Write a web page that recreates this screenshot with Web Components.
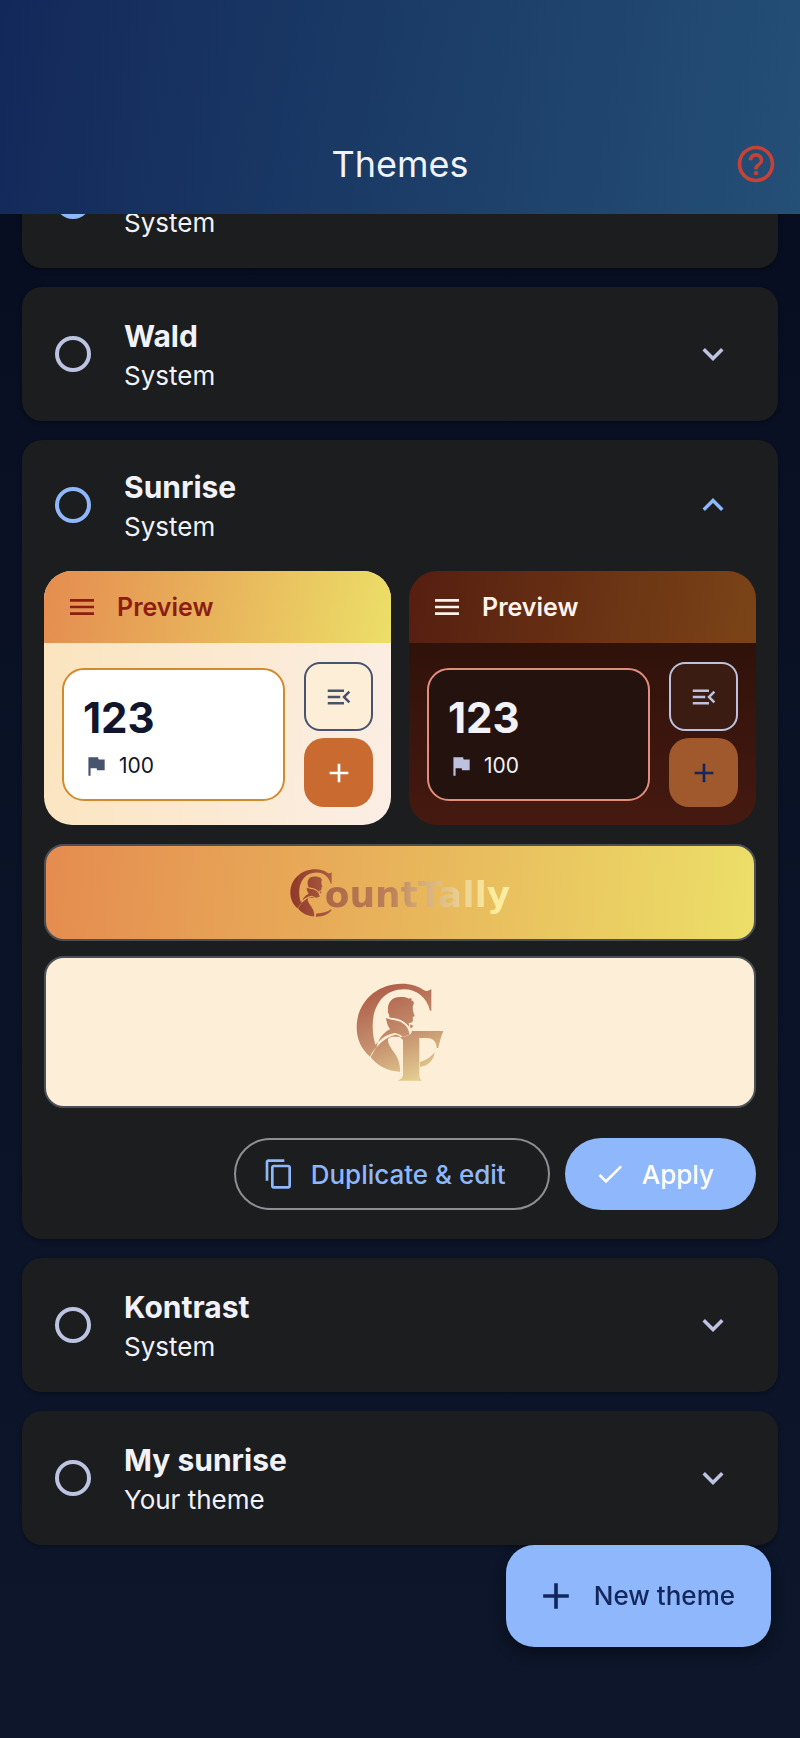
<!DOCTYPE html>
<html lang="en">
<head>
<meta charset="utf-8">
<meta name="viewport" content="width=device-width, initial-scale=1">
<title>Themes</title>
<style>
  :root {
    --surface: #1b1d1f;
    --text: #f1f2fa;
    --muted: #bcc4e2;
    --accent: #8fb7fb;
    --on-accent: #14275c;
  }

  body {
    margin: 0;
    color: var(--text);
    background: #0b1329;
    font-family: Inter, "Noto Sans", sans-serif;
  }
</style>
</head>
<body>

<themes-page>
  <theme-item name="Ozean" owner="System" selected></theme-item>
  <theme-item name="Wald" owner="System"></theme-item>
  <theme-item name="Sunrise" owner="System" open>
    <theme-details></theme-details>
  </theme-item>
  <theme-item name="Kontrast" owner="System"></theme-item>
  <theme-item name="My sunrise" owner="Your theme"></theme-item>
</themes-page>

<script>
const icons = {
  help: "M11 18h2v-2h-2v2zm1-16C6.48 2 2 6.48 2 12s4.48 10 10 10 10-4.48 10-10S17.52 2 12 2zm0 18c-4.41 0-8-3.59-8-8s3.59-8 8-8 8 3.59 8 8-3.59 8-8 8zm0-14c-2.21 0-4 1.79-4 4h2c0-1.1.9-2 2-2s2 .9 2 2c0 2-3 1.75-3 5h2c0-2.25 3-2.5 3-5 0-2.21-1.79-4-4-4z",
  down: "M7.41 8.59L12 13.17l4.59-4.58L18 10l-6 6-6-6z",
  up: "M12 8l-6 6 1.41 1.41L12 10.83l4.59 4.58L18 14z",
  menu: "M3 18h18v-2H3v2zm0-5h18v-2H3v2zm0-7v2h18V6H3z",
  menuOpen: "M3 18h13v-2H3v2zm0-5h10v-2H3v2zm0-7v2h13V6H3zm18 9.59L17.42 12 21 8.41 19.59 7l-5 5 5 5L21 15.59z",
  flag: "M14.4 6L14 4H5v17h2v-7h5.6l.4 2h7V6z",
  add: "M19 13h-6v6h-2v-6H5v-2h6V5h2v6h6v2z",
  copy: "M16 1H4c-1.1 0-2 .9-2 2v14h2V3h12V1zm3 4H8c-1.1 0-2 .9-2 2v14c0 1.1.9 2 2 2h11c1.1 0 2-.9 2-2V7c0-1.1-.9-2-2-2zm0 16H8V7h11v14z",
  check: "M9 16.17L4.83 12l-1.42 1.41L9 19 21 7l-1.41-1.41z",
};

// crescent, head, collar and coat: shared by the wordmark and the logo
const figure = `
  <path d="M304 87V152H300C290 112 260 88 222 88C162 88 128 136 128 198C128 224 132 246 140 262C130 272 124 281 120 290C94 268 80 238 80 202C80 127 140 71 215 71C243 71 266 79 281 90C290 96 298 91 304 87Z"/>
  <path d="M174 150C172 127 187 111 210 111C220 110 231 112 237 116C243 112 248 118 243 122C249 121 253 126 251 132L248 140L249 153L254 168L248 172L249 181C248 188 243 190 236 189L238 201C229 189 217 180 202 176C190 174 179 174 177 170C181 165 171 160 174 150Z"/>
  <path d="M168 174C179 180 192 179 204 183C222 189 236 201 239 225L218 230C211 224 203 220 194 219C168 224 149 238 134 258L139 264C144 238 160 217 180 208C173 198 170 187 168 174Z"/>
  <path d="M242 193L250 198L243 206C240 201 239 197 242 193Z"/>
  <path d="M122 291C139 256 164 232 197 224C203 225 208 227 212 231C196 230 177 228 174 238C172 250 184 266 194 280C205 297 211 312 210 335C174 334 142 318 122 291Z"/>
`;

const resetStyles = `
  * {
    box-sizing: border-box;
    margin: 0;
  }
  button {
    padding: 0;
    border: 0;
    background: none;
    color: inherit;
    font: inherit;
    cursor: pointer;
  }
`;

class AppIcon extends HTMLElement {
  connectedCallback() {
    const size = this.getAttribute("size") || 32;
    this.attachShadow({ mode: "open" }).innerHTML = `
      <style>
        :host { display: block; flex: none; }
        svg { display: block; fill: currentColor; }
      </style>
      <svg width="${size}" height="${size}" viewBox="0 0 24 24" aria-hidden="true">
        <path d="${icons[this.getAttribute("name")]}"/>
      </svg>
    `;
  }
}
customElements.define("app-icon", AppIcon);

class ThemesPage extends HTMLElement {
  constructor() {
    super();
    this.attachShadow({ mode: "open" }).innerHTML = `
      <style>
        ${resetStyles}
        :host {
          display: flex;
          flex-direction: column;
          height: 100vh;
          background: linear-gradient(#060b1d, #0a1125 30%, #0b1429 75%, #0d162a);
        }
        header {
          flex: none;
          display: grid;
          grid-template-columns: 1fr auto 1fr;
          align-items: center;
          padding: 136px 22px 22px;
          background: linear-gradient(100deg, #13285a, #1b3c67 50%, #244f77);
        }
        h1 {
          grid-column: 2;
          font-size: 36px;
          line-height: 56px;
          font-weight: 400;
        }
        .help {
          justify-self: end;
          color: #c64136;
        }
        main {
          flex: 1;
          min-height: 0;
          overflow-y: auto;
          scrollbar-width: none;
          display: flex;
          flex-direction: column;
          gap: 19px;
          padding: 19px 22px 193px;
        }
        /* floats over the end of the list */
        .new-theme {
          position: fixed;
          right: 29px;
          bottom: 91px;
          display: flex;
          align-items: center;
          gap: 16px;
          padding: 29px 36px 29px 28px;
          border-radius: 28px;
          background: var(--accent);
          color: var(--on-accent);
          font-size: 26px;
          line-height: 44px;
          font-weight: 500;
          box-shadow: 0 6px 14px rgba(0, 0, 0, 0.4);
        }
      </style>
      <header>
        <h1>Themes</h1>
        <button class="help" aria-label="Help"><app-icon name="help" size="44"></app-icon></button>
      </header>
      <main><slot></slot></main>
      <button class="new-theme"><app-icon name="add" size="44"></app-icon>New theme</button>
    `;
  }

  connectedCallback() {
    // open at the end of the list, where the user's own themes are
    requestAnimationFrame(() => this.scrollToEnd());
  }

  scrollToEnd() {
    const list = this.shadowRoot.querySelector("main");
    list.scrollTop = list.scrollHeight;
  }
}

class ThemeItem extends HTMLElement {
  connectedCallback() {
    const name = this.getAttribute("name");
    const open = this.hasAttribute("open");
    this.attachShadow({ mode: "open" }).innerHTML = `
      <style>
        ${resetStyles}
        :host {
          display: block;
          flex: none;
          border-radius: 20px;
          background: var(--surface);
          box-shadow: 0 2px 4px rgba(0, 0, 0, 0.3);
        }
        .row {
          display: flex;
          align-items: center;
          padding: 27px 44px 27px 33px;
          color: var(--muted);
        }
        :host([open]) .row {
          padding-top: 25px;
          padding-bottom: 26px;
          color: var(--accent);
        }
        input {
          appearance: none;
          flex: none;
          width: 36px;
          height: 36px;
          border: 4px solid;
          border-radius: 50%;
          color: inherit;
        }
        input:checked {
          border-color: var(--accent);
          background: var(--accent);
        }
        label {
          flex: 1;
          padding-left: 33px;
          color: var(--text);
        }
        .name, .owner { display: block; }
        .name {
          font-size: 30px;
          line-height: 44px;
          font-weight: 700;
        }
        .owner {
          font-size: 26px;
          line-height: 36px;
        }
        .body { padding: 0 22px 29px; }
        .body[hidden] { display: none; }
      </style>
      <div class="row">
        <input type="radio" id="pick" ${this.hasAttribute("selected") ? "checked" : ""}>
        <label for="pick">
          <span class="name">${name}</span>
          <span class="owner">${this.getAttribute("owner")}</span>
        </label>
        <button aria-label="Details" aria-expanded="${open}">
          <app-icon name="${open ? "up" : "down"}" size="42"></app-icon>
        </button>
      </div>
      <div class="body" ${open ? "" : "hidden"}><slot></slot></div>
    `;
  }
}

class ThemePreview extends HTMLElement {
  connectedCallback() {
    this.attachShadow({ mode: "open" }).innerHTML = `
      <style>
        ${resetStyles}
        :host {
          display: block;
          min-width: 0;
          overflow: hidden;
          border-radius: 28px;
          background: linear-gradient(100deg, #fbe4bd, #fbeee5);
          --bar: linear-gradient(100deg, #e58c50, #e8b45b 50%, #ecdf68);
          --bar-text: #8c1d10;
          --card: #fff;
          --card-border: #d28a2c;
          --card-text: #12162c;
          --line: #47536f;
          --tonal: #fdeed8;
          --fill: #c96b31;
          --on-fill: #fff;
        }
        :host([dark]) {
          background: linear-gradient(#270f08, #451910);
          --bar: linear-gradient(100deg, #551e10, #7b4417);
          --bar-text: #fff3ec;
          --card: #24120f;
          --card-border: #e28e7d;
          --card-text: #f1f2fa;
          --line: #bcc2de;
          --tonal: #3a1c13;
          --fill: #9f592c;
          --on-fill: #14275c;
        }
        .bar {
          display: flex;
          align-items: center;
          gap: 19px;
          padding: 0 22px;
          background: var(--bar);
          color: var(--bar-text);
          font-size: 25px;
          line-height: 72px;
          font-weight: 600;
        }
        .content {
          display: flex;
          align-items: center;
          gap: 19px;
          padding: 19px 18px 18px;
        }
        .card {
          flex: 1;
          min-width: 0;
          padding: 20px 19px 13px;
          border: 2px solid var(--card-border);
          border-radius: 22px;
          background: var(--card);
          color: var(--card-text);
        }
        .count {
          font-size: 42px;
          line-height: 56px;
          font-weight: 700;
        }
        .goal {
          display: flex;
          align-items: center;
          gap: 10px;
          font-size: 21px;
          line-height: 40px;
        }
        .goal app-icon { color: var(--line); }
        .actions {
          display: grid;
          gap: 7px;
        }
        .actions button {
          display: grid;
          place-items: center;
          width: 69px;
          height: 69px;
          border-radius: 20px;
        }
        .actions .outlined {
          border: 2px solid var(--line);
          border-radius: 16px;
          background: var(--tonal);
          color: var(--line);
        }
        .filled {
          background: var(--fill);
          color: var(--on-fill);
        }
      </style>
      <div class="bar"><app-icon name="menu"></app-icon>Preview</div>
      <div class="content">
        <div class="card">
          <p class="count">123</p>
          <p class="goal"><app-icon name="flag" size="26"></app-icon>100</p>
        </div>
        <div class="actions">
          <button class="outlined" aria-label="Collapse"><app-icon name="menuOpen" size="30"></app-icon></button>
          <button class="filled" aria-label="Add"><app-icon name="add"></app-icon></button>
        </div>
      </div>
    `;
  }
}

class ThemeWordmark extends HTMLElement {
  constructor() {
    super();
    this.attachShadow({ mode: "open" }).innerHTML = `
      <style>
        :host {
          display: flex;
          align-items: center;
          justify-content: center;
          height: 97px;
          box-sizing: border-box;
          border: 2px solid #4c5056;
          border-radius: 20px;
          background: linear-gradient(95deg, #e58c50, #e8b45b 50%, #ecdf68);
        }
        svg { display: block; }
        span {
          margin-left: -7px;
          padding-top: 4px;
          font-family: "DejaVu Sans", sans-serif;
          font-size: 36px;
          line-height: 48px;
          font-weight: 700;
          color: transparent;
          background: linear-gradient(90deg, #ac6747, #bd8059 36%, #d1a878 50%, #e4c78c 68%, #fbec9f 90%);
          background-clip: text;
        }
      </style>
      <svg width="42" height="48" viewBox="78 69 228 269" preserveAspectRatio="none" aria-hidden="true">
        <defs>
          <linearGradient id="g" gradientUnits="userSpaceOnUse" x1="80" y1="0" x2="304" y2="0">
            <stop offset="0" stop-color="#8f3929"/>
            <stop offset="1" stop-color="#ab5c41"/>
          </linearGradient>
        </defs>
        <g fill="url(#g)">
          ${figure}
          <path d="M218 336L221 318C250 319 280 311 301 295L305 299C286 326 255 337 218 336Z"/>
        </g>
      </svg>
      <span>ountTally</span>
    `;
  }
}

class ThemeLogo extends HTMLElement {
  constructor() {
    super();
    this.attachShadow({ mode: "open" }).innerHTML = `
      <style>
        :host {
          display: flex;
          align-items: center;
          justify-content: center;
          height: 152px;
          box-sizing: border-box;
          border: 2px solid #4c5056;
          border-radius: 20px;
          background: #fdeed8;
        }
        svg { display: block; }
      </style>
      <svg width="88" height="98" viewBox="78 69 264 294" role="img" aria-label="CT">
        <defs>
          <linearGradient id="g" gradientUnits="userSpaceOnUse" x1="140" y1="90" x2="245" y2="362">
            <stop offset="0" stop-color="#b0604a"/>
            <stop offset="0.5" stop-color="#c38d6c"/>
            <stop offset="1" stop-color="#e3cc90"/>
          </linearGradient>
        </defs>
        <g fill="url(#g)">
          ${figure}
          <path d="M246 213H340C334 228 329 245 325 264H320C319 244 309 234 289 234H268V341C268 353 270 358 276 362H203C213 357 219 354 219 341V240L210 232L232 228C240 226 244 221 246 213Z"/>
          <path d="M270 306C287 302 302 293 314 277C311 302 294 318 270 321Z"/>
        </g>
      </svg>
    `;
  }
}

class ThemeDetails extends HTMLElement {
  constructor() {
    super();
    this.attachShadow({ mode: "open" }).innerHTML = `
      <style>
        ${resetStyles}
        :host { display: block; }
        .previews {
          display: grid;
          grid-template-columns: 1fr 1fr;
          gap: 18px;
        }
        theme-wordmark { margin-top: 19px; }
        theme-logo { margin-top: 15px; }
        .buttons {
          display: flex;
          flex-wrap: wrap;
          justify-content: flex-end;
          gap: 15px;
          margin-top: 30px;
        }
        .buttons button {
          display: flex;
          align-items: center;
          height: 72px;
          border-radius: 36px;
          font-size: 26px;
          font-weight: 500;
        }
        .duplicate {
          gap: 16px;
          padding: 0 42px 0 27px;
          border: 2px solid #8d8f95;
          color: var(--accent);
        }
        .apply {
          gap: 16px;
          padding: 0 42px 0 29px;
          background: var(--accent);
          color: #fff;
        }
      </style>
      <div class="previews">
        <theme-preview></theme-preview>
        <theme-preview dark></theme-preview>
      </div>
      <theme-wordmark></theme-wordmark>
      <theme-logo></theme-logo>
      <div class="buttons">
        <button class="duplicate"><app-icon name="copy"></app-icon>Duplicate &amp; edit</button>
        <button class="apply"><app-icon name="check"></app-icon>Apply</button>
      </div>
    `;
  }
}

customElements.define("theme-preview", ThemePreview);
customElements.define("theme-wordmark", ThemeWordmark);
customElements.define("theme-logo", ThemeLogo);
customElements.define("theme-details", ThemeDetails);
customElements.define("theme-item", ThemeItem);
customElements.define("themes-page", ThemesPage);

// once more after the list items have rendered
document.querySelector("themes-page").scrollToEnd();
</script>
</body>
</html>
